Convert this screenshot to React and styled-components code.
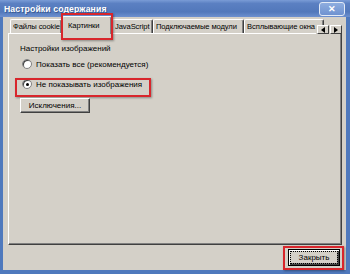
import styled, { createGlobalStyle } from "styled-components";

const GlobalStyle = createGlobalStyle`
  html, body {
    margin: 0;
    padding: 0;
    background: #d4d0c8;
  }
  * {
    box-sizing: border-box;
  }
`;

const Window = styled.div`
  width: 350px;
  height: 274px;
  display: flex;
  flex-direction: column;
  background: #4f79bd;
  padding: 0 4px 4px 3px;
  font-family: "Liberation Sans", Arial, sans-serif;
  font-size: 8px;
  color: #000;
  overflow: hidden;
`;

const TitleBar = styled.div`
  height: 17px;
  margin: 0 -4px 0 -3px;
  padding: 0 5px 0 4px;
  display: flex;
  align-items: center;
  justify-content: space-between;
  background: linear-gradient(#7a9cd6 0%, #5b80c2 20%, #5278bb 70%, #6d90cf 100%);
`;

const Title = styled.div`
  color: #fff;
  font-weight: bold;
  font-size: 8.7px;
  letter-spacing: 0.1px;
  text-shadow: 1px 1px 0 #3a5a92;
`;

const CloseBtn = styled.div`
  width: 26px;
  height: 14px;
  margin-top: 1px;
  border: 1px solid #e3ebf7;
  border-radius: 3px;
  background: linear-gradient(#8eaddf, #6f92d0);
  color: #fff;
  font-size: 9px;
  font-weight: bold;
  display: flex;
  align-items: center;
  justify-content: center;
  line-height: 1;
`;

const Body = styled.div`
  flex: 1;
  display: flex;
  flex-direction: column;
  background: #d4d0c8;
  padding: 0 4px 0 5px;
`;

const TabRow = styled.div`
  height: 16px;
  display: flex;
  align-items: flex-end;
  padding-left: 2px;
  position: relative;
  z-index: 1;
`;

const Tab = styled.div`
  position: relative;
  flex: none;
  width: ${(p) => p.$w}px;
  height: ${(p) => (p.$active ? 18 : 14)}px;
  margin-bottom: ${(p) => (p.$active ? "-1px" : "0")};
  padding: ${(p) => (p.$active ? "4px 0 0 5px" : "2px 0 0 2px")};
  background: #d4d0c8;
  border-top: 1px solid #fff;
  border-left: 1px solid #fff;
  border-right: 1px solid #404040;
  box-shadow: inset -1px 0 0 #808080;
  border-top-left-radius: 2px;
  border-top-right-radius: 2px;
  white-space: nowrap;
  font-size: 7.6px;
  letter-spacing: -0.1px;
  z-index: ${(p) => (p.$active ? 2 : 0)};
  ${(p) =>
    p.$active &&
    `
    &::after {
      content: "";
      position: absolute;
      left: -2px;
      top: -4px;
      right: -2px;
      bottom: -6px;
      border: 2px solid #d8262c;
      box-shadow: 1px 1px 2px rgba(0,0,0,0.35);
    }
    `}
`;

const TabText = styled.span`
  display: block;
  overflow: hidden;
`;

const Arrows = styled.div`
  position: absolute;
  right: 0;
  top: 8px;
  display: flex;
  gap: 1px;
  padding-left: 1px;
  background: #d4d0c8;
  z-index: 3;
`;

const ArrowBtn = styled.div`
  width: 12px;
  height: 9px;
  background: #d4d0c8;
  border: 1px solid;
  border-color: #fff #404040 #404040 #fff;
  display: flex;
  align-items: center;
  justify-content: center;
`;

const Panel = styled.div`
  height: 212px;
  border: 1px solid;
  border-color: #fff #404040 #404040 #fff;
  box-shadow: inset -1px -1px 0 #808080;
  padding: 10px 11px;
  display: flex;
  flex-direction: column;
  align-items: flex-start;
`;

const GroupLabel = styled.div`
  height: 12px;
  margin-bottom: 1px;
`;

const RadioRow = styled.label`
  position: relative;
  display: flex;
  align-items: center;
  gap: 4px;
  height: 14px;
  margin: 0 0 ${(p) => p.$gap}px 2px;
  ${(p) =>
    p.$marked &&
    `
    &::after {
      content: "";
      position: absolute;
      left: -7px;
      top: 1px;
      width: 132px;
      height: 15px;
      border: 2px solid #d8262c;
      box-shadow: 1px 1px 2px rgba(0,0,0,0.35);
    }
  `}
`;

const RadioDot = styled.span`
  width: 10px;
  height: 10px;
  border-radius: 50%;
  background: #fff;
  border: 1px solid #808080;
  box-shadow: inset 1px 1px 0 #404040;
  display: flex;
  align-items: center;
  justify-content: center;
  &::before {
    content: "";
    width: 3px;
    height: 3px;
    border-radius: 50%;
    background: ${(p) => (p.$checked ? "#000" : "transparent")};
  }
`;

const Button = styled.div`
  width: ${(p) => p.$w}px;
  height: ${(p) => p.$h}px;
  border: 1px solid;
  border-color: #fff #404040 #404040 #fff;
  box-shadow: inset -1px -1px 0 #808080;
  background: #d4d0c8;
  display: flex;
  align-items: center;
  justify-content: center;
  position: relative;
`;

const Footer = styled.div`
  flex: 1;
  display: flex;
  justify-content: flex-end;
  align-items: flex-start;
  padding-top: 4px;
  padding-right: 2px;
`;

const CloseButton = styled(Button)`
  border-color: #000;
  box-shadow: inset 1px 1px 0 #fff, inset -1px -1px 0 #404040, inset -2px -2px 0 #808080;
  &::after {
    content: "";
    position: absolute;
    left: -6px;
    top: -4px;
    right: -5px;
    bottom: -5px;
    border: 2px solid #d8262c;
    box-shadow: 1px 1px 2px rgba(0,0,0,0.35);
  }
  span {
    padding: 1px 8px;
    border: 1px dotted #000;
  }
`;

const tabs = [
  { label: "Файлы cookie", w: 52 },
  { label: "Картинки", w: 50, active: true },
  { label: "JavaScript", w: 41 },
  { label: "Подключаемые модули", w: 91 },
  { label: "Всплывающие окна", w: 80 },
];

export default function App() {
  return (
    <>
      <GlobalStyle />
      <Window>
        <TitleBar>
          <Title>Настройки содержания</Title>
          <CloseBtn>✕</CloseBtn>
        </TitleBar>
        <Body>
          <TabRow>
            {tabs.map((t) => (
              <Tab key={t.label} $w={t.w} $active={t.active}>
                <TabText>{t.label}</TabText>
              </Tab>
            ))}
            <Arrows>
              <ArrowBtn>
                <svg width="4" height="6" viewBox="0 0 4 6">
                  <path d="M4 0 L0 3 L4 6 Z" fill="#000" />
                </svg>
              </ArrowBtn>
              <ArrowBtn>
                <svg width="4" height="6" viewBox="0 0 4 6">
                  <path d="M0 0 L4 3 L0 6 Z" fill="#000" />
                </svg>
              </ArrowBtn>
            </Arrows>
          </TabRow>
          <Panel>
            <GroupLabel>Настройки изображений</GroupLabel>
            <RadioRow $gap={6}>
              <RadioDot />
              Показать все (рекомендуется)
            </RadioRow>
            <RadioRow $marked $gap={7}>
              <RadioDot $checked />
              Не показывать изображения
            </RadioRow>
            <Button $w={70} $h={15}>Исключения...</Button>
          </Panel>
          <Footer>
            <CloseButton $w={52} $h={17}>
              <span>Закрыть</span>
            </CloseButton>
          </Footer>
        </Body>
      </Window>
    </>
  );
}
